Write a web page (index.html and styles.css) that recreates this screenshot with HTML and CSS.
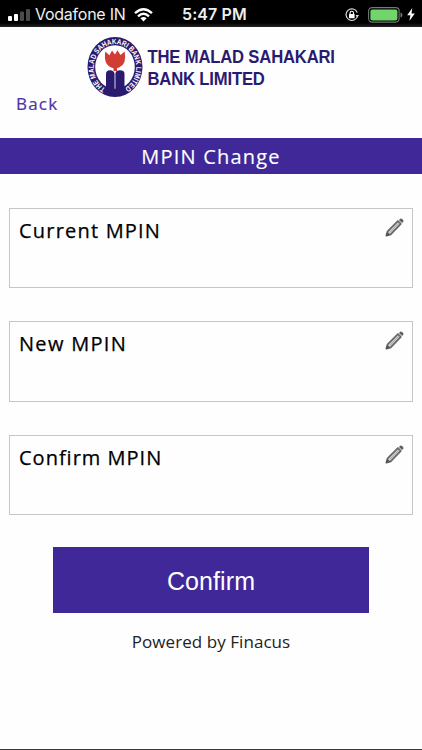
FILE: index.html
```html
<!DOCTYPE html>
<html lang="en">
<head>
<meta charset="UTF-8">
<meta name="viewport" content="width=device-width, initial-scale=1.0">
<title>MPIN Change</title>
<link rel="stylesheet" href="styles.css">
</head>
<body>
<svg width="0" height="0" class="sprite">
  <symbol id="pencil" viewBox="0 0 20 20">
    <path d="M1.5 18.5 2.8 14 13.6 3.2 16.6 6.2 6 17.2Z" fill="#ddd" stroke="#686868" stroke-width="1.9" stroke-linejoin="round"/>
    <path d="M5 15.2 15 5.2" stroke="#aaa" stroke-width="1.1"/>
    <path d="M.8 19.2 2.3 14.4 5.8 17.7Z" fill="#555"/>
    <path d="M14.7 2 16 .7Q17 0 18 1L19 2Q20 3 19.2 4L18 5.3Z" fill="#606060"/>
  </symbol>
</svg>

<div class="status">
  <div class="carrier">
    <svg class="signal" width="22" height="12" viewBox="0 0 22 12">
      <rect x="0" y="7" width="4" height="5" rx="1" fill="#fff"/>
      <rect x="6" y="5" width="4" height="7" rx="1" fill="#fff"/>
      <rect x="12" y="2.5" width="4" height="9.5" rx="1" fill="#4b4b4b"/>
      <rect x="18" y="0" width="4" height="12" rx="1" fill="#4b4b4b"/>
    </svg>
    <span class="network">Vodafone IN</span>
    <svg class="wifi" width="19" height="14" viewBox="0 0 19 14" fill="none" stroke="#fff" stroke-width="2.3">
      <path d="M1 5.2Q9.5-2.6 18 5.2M4 8.3Q9.5 3.2 15 8.3"/>
      <path d="M9.5 13.5 6.4 10.3Q9.5 7.8 12.6 10.3Z" fill="#fff" stroke="none"/>
    </svg>
  </div>
  <span class="time">5:47 PM</span>
  <div class="power">
    <svg width="14" height="14" viewBox="0 0 14 14">
      <path d="M12.6 7.5A5.8 5.8 0 1 1 12.2 4.4" fill="none" stroke="#ddd" stroke-width="1.2"/>
      <path d="M10.6 7h3.4l-1.7 2.4Z" fill="#ddd"/>
      <rect x="4" y="6" width="5.6" height="4.2" rx=".5" fill="#fff"/>
      <path d="M5.1 6.4V5a1.7 1.7 0 0 1 3.4 0v1.4" fill="none" stroke="#fff" stroke-width="1.1"/>
    </svg>
    <svg class="battery" width="35" height="16" viewBox="0 0 35 16">
      <rect x=".6" y=".6" width="30.5" height="14.5" rx="3.5" fill="none" stroke="#777" stroke-width="1.1"/>
      <rect x="2.4" y="2.4" width="27" height="11" rx="2" fill="#70d66b"/>
      <path d="M32.5 5.5Q34.5 6 34.5 8T32.5 10.5Z" fill="#777"/>
    </svg>
    <svg class="bolt" width="8" height="13" viewBox="0 0 8 13">
      <path d="M5.3 0 .2 7.2H3.4L2.4 13 7.8 5.4H4.5Z" fill="#fff"/>
    </svg>
  </div>
</div>

<header class="header">
  <div class="brand">
    <svg class="emblem" width="56" height="60" viewBox="0 0 56 60">
      <defs>
        <path id="ring" d="M18.5 51.3A21.2 23.3 0 1 1 37.5 51.3"/>
      </defs>
      <ellipse cx="28" cy="30" rx="27.5" ry="30" fill="#2b1b70"/>
      <ellipse cx="28" cy="30" rx="19.8" ry="21.8" fill="#fff"/>
      <path d="M19 37Q19 33.3 23 33.3T27.6 37V56H19ZM28.4 37Q28.4 33.3 33 33.3T37.5 37V56H28.4Z" fill="#2b1b70"/>
      <path d="M18.3 14.5 22.5 18.2 25 13.5 28 17.5 30.5 13.3 33.5 18 37.7 14.5Q40 27.5 32 30.5L30 31.2V34H26.5V31.2Q16 29 18.3 14.5Z" fill="#d13c35"/>
      <text class="ring-text"><textPath href="#ring" textLength="119" lengthAdjust="spacingAndGlyphs">THE MALAD SAHAKARI BANK LIMITED</textPath></text>
    </svg>
    <div class="bank-name">
      <span class="bank-line">THE MALAD SAHAKARI</span>
      <span class="bank-line">BANK LIMITED</span>
    </div>
  </div>
  <a class="back">Back</a>
</header>

<h1 class="page-title">MPIN Change</h1>

<main class="form">
  <div class="field">
    <span class="label current">Current MPIN</span>
    <svg class="pencil" width="19" height="19"><use href="#pencil"/></svg>
  </div>
  <div class="field">
    <span class="label new">New MPIN</span>
    <svg class="pencil" width="19" height="19"><use href="#pencil"/></svg>
  </div>
  <div class="field">
    <span class="label">Confirm MPIN</span>
    <svg class="pencil" width="19" height="19"><use href="#pencil"/></svg>
  </div>
  <button class="confirm">Confirm</button>
</main>

<footer class="footer">Powered by Finacus</footer>
</body>
</html>
```

FILE: styles.css
```css
* {
  box-sizing: border-box;
}
body {
  margin: 0;
  height: 750px;
  display: flex;
  flex-direction: column;
  background: #fefefe;
  border-bottom: 1px solid #3b393b;
  font-family: "Open Sans", "Noto Sans", sans-serif;
  color: #000;
  overflow: hidden;
}
.sprite {
  display: block;
  flex: none;
}
.status {
  display: grid;
  grid-template-columns: 182px 64px 1fr;
  align-items: center;
  height: 27px;
  padding-top: 2px;
  background: linear-gradient(#000 23px, #242424);
  color: #eee;
  font-family: Inter, "Liberation Sans", sans-serif;
  font-size: 16px;
  line-height: 25px;
  white-space: nowrap;
}
.carrier, .power {
  display: flex;
  align-items: center;
}
.carrier {
  padding-left: 8px;
}
.network {
  margin-left: 5px;
  width: 90px;
  letter-spacing: -0.25px;
}
.wifi {
  margin-left: 9px;
}
.time {
  font-weight: 600;
  letter-spacing: 0.1px;
}
.power {
  justify-content: flex-end;
  padding-right: 7px;
}
.battery {
  margin-left: 9px;
}
.bolt {
  margin-left: 4px;
}
.header {
  height: 111px;
  padding-top: 10px;
}
.brand {
  display: flex;
  height: 60px;
  padding-left: 87px;
}
.ring-text {
  font-family: "Liberation Sans", sans-serif;
  font-size: 7.6px;
  font-weight: bold;
  fill: #fff;
}
.bank-name {
  display: flex;
  flex-direction: column;
  padding: 9px 0 0 5px;
  color: #2b1b70;
  font-family: "Liberation Sans", sans-serif;
  font-size: 18.5px;
  font-weight: bold;
  line-height: 22px;
  white-space: nowrap;
  transform: scaleX(0.9);
  transform-origin: left;
}
.bank-line {
  letter-spacing: -0.2px;
}
.back {
  display: block;
  padding-left: 16px;
  color: #5033a4;
  font-size: 17px;
  font-weight: 500;
  -webkit-text-stroke: 0.2px #5033a4;
  line-height: 13px;
  letter-spacing: 1.2px;
}
.page-title {
  margin: 0;
  height: 36px;
  background: #402898;
  color: #fff;
  font-size: 20px;
  font-weight: 500;
  -webkit-text-stroke: 0.15px #fff;
  line-height: 38px;
  letter-spacing: 1.2px;
  text-align: center;
}
.form {
  display: flex;
  flex-direction: column;
  gap: 33px;
  padding: 34px 9px 0;
}
.field {
  display: flex;
  justify-content: space-between;
  height: 80.3px;
  padding: 9px 8px 0 9px;
  border: 1px solid #c6c6c6;
}
.label {
  font-size: 20px;
  font-weight: 500;
  -webkit-text-stroke: 0.25px #000;
  line-height: 26px;
  letter-spacing: 1px;
}
.label.current {
  letter-spacing: 1.2px;
}
.label.new {
  letter-spacing: 1.3px;
}
.confirm {
  align-self: center;
  width: 316px;
  height: 66px;
  margin-top: -0.9px;
  padding: 2px 0 0;
  border: 0;
  background: #402898;
  color: #fff;
  font-family: "Liberation Sans", sans-serif;
  font-size: 25px;
  letter-spacing: 0.1px;
}
.footer {
  margin-top: 17px;
  color: #222;
  font-size: 17px;
  letter-spacing: 0.06px;
  line-height: 23px;
  text-align: center;
}
```
